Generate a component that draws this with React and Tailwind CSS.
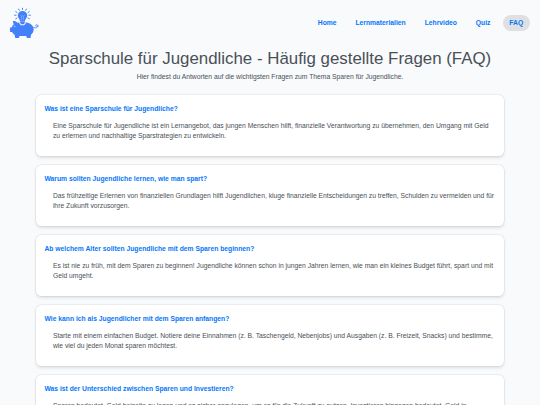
const nav = [
  { label: 'Home' },
  { label: 'Lernmaterialien' },
  { label: 'Lehrvideo' },
  { label: 'Quiz' },
  { label: 'FAQ', active: true },
];

const faqs = [
  {
    question: 'Was ist eine Sparschule für Jugendliche?',
    lines: [
      'Eine Sparschule für Jugendliche ist ein Lernangebot, das jungen Menschen hilft, finanzielle Verantwortung zu übernehmen, den Umgang mit Geld',
      'zu erlernen und nachhaltige Sparstrategien zu entwickeln.',
    ],
  },
  {
    question: 'Warum sollten Jugendliche lernen, wie man spart?',
    lines: [
      'Das frühzeitige Erlernen von finanziellen Grundlagen hilft Jugendlichen, kluge finanzielle Entscheidungen zu treffen, Schulden zu vermeiden und für',
      'ihre Zukunft vorzusorgen.',
    ],
  },
  {
    question: 'Ab welchem Alter sollten Jugendliche mit dem Sparen beginnen?',
    lines: [
      'Es ist nie zu früh, mit dem Sparen zu beginnen! Jugendliche können schon in jungen Jahren lernen, wie man ein kleines Budget führt, spart und mit',
      'Geld umgeht.',
    ],
  },
  {
    question: 'Wie kann ich als Jugendlicher mit dem Sparen anfangen?',
    lines: [
      'Starte mit einem einfachen Budget. Notiere deine Einnahmen (z. B. Taschengeld, Nebenjobs) und Ausgaben (z. B. Freizeit, Snacks) und bestimme,',
      'wie viel du jeden Monat sparen möchtest.',
    ],
  },
  {
    question: 'Was ist der Unterschied zwischen Sparen und Investieren?',
    lines: [
      'Sparen bedeutet, Geld beiseite zu legen und es sicher anzulegen, um es für die Zukunft zu nutzen. Investieren hingegen bedeutet, Geld in',
    ],
  },
];

function Logo() {
  return (
    <svg viewBox="0 0 32 34" className="h-[34px] w-8 shrink-0" fill="none">
      {/* piggy bank */}
      <path d="M4.800 15c2-.2 3.500.3 4.500 1.700 1.500-.5 3.200-.7 5.200-.7 5.800 0 10.200 2.300 11 6 .6 3-.6 5.200-2.500 6.800l-.5 3.200h-3.600l-.6-2h-6.800l-.6 2H7.300l-.7-3.200c-1.200-.7-2-1.600-2.600-2.800H2v-4.400h1.700c.4-1.300 1-2.300 2-3.100Z" fill="#4480fa" />
      <path d="M25.400 21.400c2.600 1.300 4.700.2 4.500-1.700-.2-1.300-2.100-1.300-2.200-.2 0 .9 1.300 1.200 2.500.6" stroke="#5b8ff8" strokeWidth="0.9" strokeLinecap="round" />
      <circle cx="6.800" cy="20.300" r=".6" fill="#e4edff" />
      {/* light bulb, separated from the pig by a light outline */}
      <path d="M11.400 14.500h6.200v3.200l-1.600 1.500h-3l-1.600-1.500Z" fill="#f8fafd" />
      <path d="M14.500 4.900a4.700 4.700 0 0 0-4.700 4.600c0 2.300 1.900 3.200 2.200 5.400h5c.3-2.200 2.200-3.100 2.200-5.400a4.700 4.700 0 0 0-4.700-4.600Z" fill="#4480fa" />
      <path d="M12.300 9.200l1.300 1.200.9-1 .9 1 1.300-1.200M13.600 10.400v4M15.400 10.400v4" stroke="#bcd2ff" strokeWidth="0.4" />
      <path d="M12.200 15.300h4.600v1.800l-1.200 1.100h-2.200l-1.200-1.100Z" fill="#4480fa" />
      <g stroke="#4480fa" strokeWidth="1" strokeLinecap="round">
        <path d="M14.500 2.200v1.200M10.600 3.100l.6 1.200M18.400 3.100l-.6 1.200M7.800 5.700l1.200.8M21.200 5.700l-1.200.8M6.600 9.200h1.500M20.900 9.200h1.500M7.700 12.800l1.300-.8M21.300 12.800l-1.300-.8" />
      </g>
    </svg>
  );
}

export default function App() {
  return (
    <div className="h-[405px] w-[540px] overflow-hidden bg-[#f8fafc] font-['Liberation_Sans',Arial,sans-serif] text-[6.75px] leading-[10.125px] text-[#495057]">
      <header className="flex h-[45px] items-center justify-between pr-[10.500px] pl-2">
        <Logo />
        <nav className="flex gap-[6.300px] pt-px font-bold text-[#0577f8]">
          {nav.map((item) => (
            <a
              key={item.label}
              className={item.active ? 'rounded-full bg-[#dfe0e2] px-[6.300px] py-[2.800px]' : 'px-[6.300px] py-[2.800px]'}
            >
              {item.label}
            </a>
          ))}
        </nav>
      </header>
      <main className="px-[35.800px]">
        <h1 className="pt-[3px] text-center text-[16.875px] leading-[21px] whitespace-nowrap">
          Sparschule für Jugendliche - Häufig gestellte Fragen (FAQ)
        </h1>
        <p className="pt-[2.500px] text-center">
          Hier findest du Antworten auf die wichtigsten Fragen zum Thema Sparen für Jugendliche.
        </p>
        <div className="mt-[13px] flex flex-col gap-[8.600px]">
          {faqs.map((faq) => (
            <section
              key={faq.question}
              className="h-[61.400px] shrink-0 rounded-[5.500px] bg-white px-[8.700px] pt-[9px] shadow-[0_0_0_0.5px_rgba(0,0,0,0.08),0_1.700px_3.400px_rgba(0,0,0,0.11)]"
            >
              <h2 className="font-bold text-[#0577f8]">{faq.question}</h2>
              <div className="pt-[7px] pl-[8.400px] whitespace-nowrap">
                {faq.lines.map((line) => (
                  <p key={line}>{line}</p>
                ))}
              </div>
            </section>
          ))}
        </div>
      </main>
    </div>
  );
}
